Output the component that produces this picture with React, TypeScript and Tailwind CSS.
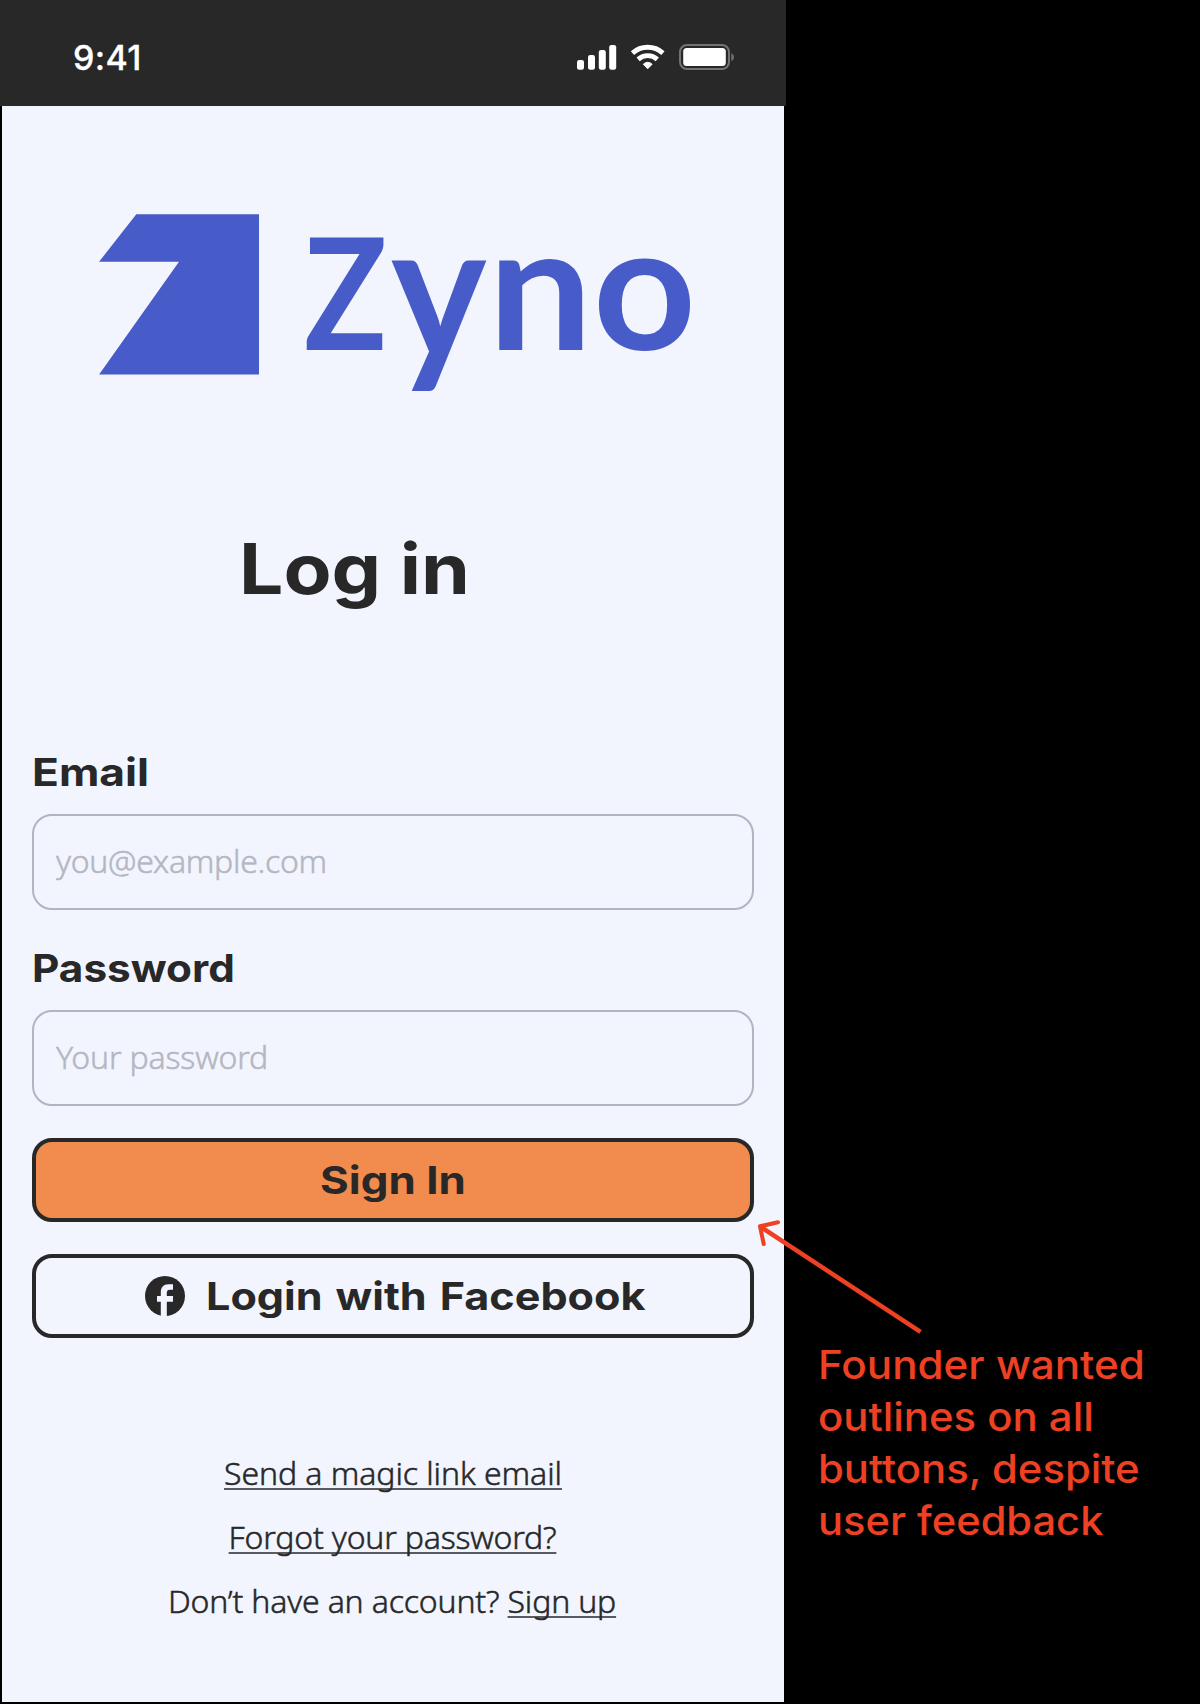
import type { ReactNode } from "react";

function StatusBar() {
  return (
    <header className="flex h-[106px] w-[786px] shrink-0 items-center bg-[#282828] pt-[9px] pl-[73px] text-white">
      <time className="w-[504px] font-['Inter'] text-[34px] leading-[48px] font-medium tracking-[0.400px] [-webkit-text-stroke-width:0.3px]">9:41</time>
      <svg className="-mt-px h-[26px] w-[158px]" viewBox="577 44 158 26" fill="#fff">
        <rect x="577" y="60" width="7" height="9.8" rx="2.2" />
        <rect x="588" y="55" width="7" height="14.8" rx="2.2" />
        <rect x="598.8" y="50" width="7" height="19.8" rx="2.2" />
        <rect x="609.2" y="45" width="7" height="24.8" rx="2.2" />
        <g fill="none" stroke="#fff" strokeWidth="4.800">
          <path d="M632.450 53.100A22.800 22.800 0 0 1 662.950 53.100" />
          <path d="M638.100 59.400A14.300 14.300 0 0 1 657.300 59.400" />
        </g>
        <path d="M647.700 68.800 643.300 64.200Q647.700 60.400 652.100 64.200Z" stroke="#fff" strokeWidth="1" strokeLinejoin="round" />
        <rect x="680" y="45" width="49" height="24" rx="7" fill="none" stroke="#737373" strokeWidth="2" />
        <rect x="683.200" y="48" width="42.600" height="18" rx="3.500" />
        <path d="M731.300 53.200v8c1.500-.700 2.600-2.200 2.600-4s-1.100-3.300-2.600-4z" fill="#737373" />
      </svg>
    </header>
  );
}

function Logo() {
  return (
    <div className="flex h-[316px] items-start pl-[97px] text-[#475bc9]">
      <svg className="mt-[108px] h-[161px] w-[161px]" viewBox="0 0 161 161" fill="currentColor">
        <path d="M37.300.300H160V160.500H.100L80 47.700H.100Z" />
      </svg>
      <div className="mt-[89px] ml-[44px] flex items-baseline font-['Lato'] text-[174px] leading-[176px] font-bold">
        <span className="block w-[87.300px] origin-left scale-x-[0.880] text-[156px]">Z</span>
        <span className="block w-[97px] origin-[0_67px] scale-x-[1.040] scale-y-[1.100]">y</span>
        <span className="block w-[105px] origin-left scale-x-[1.065]">n</span>
        <span className="block w-[96px] origin-left scale-x-[1.030]">o</span>
      </div>
    </div>
  );
}

function Field({ label, labelScale, type, placeholder, spacing }: { label: string; labelScale: string; type: string; placeholder: string; spacing: string }) {
  return (
    <label className="block">
      <span className={`block w-fit origin-left font-['Inter'] text-[38.5px] leading-[48px] font-bold ${labelScale}`}>{label}</span>
      <input
        type={type}
        placeholder={placeholder}
        className={`mt-[18px] block h-[96px] w-full rounded-[20px] border-2 border-[#b2b5bf] bg-transparent px-[22px] pb-[4px] font-['Noto_Sans'] text-[32px] font-light [-webkit-text-stroke-width:0.5px] placeholder:text-[#b4b7c1] placeholder:opacity-100 ${spacing}`}
      />
    </label>
  );
}

function Button({ children, className }: { children: ReactNode; className: string }) {
  return (
    <button className={`mt-8 flex h-[84px] w-full items-center rounded-[20px] border-4 border-[#282828] font-['Inter'] text-[38.5px] leading-[48px] font-bold whitespace-nowrap ${className}`}>
      {children}
    </button>
  );
}

const underlined = "underline decoration-[#5a5b5f] decoration-2 underline-offset-[3px] [text-decoration-skip-ink:none]";

const noteLines = [
  { text: "Founder wanted", fit: "scale-x-[1.081]" },
  { text: "outlines on all", fit: "scale-x-[1.073]" },
  { text: "buttons, despite", fit: "scale-x-[1.071]" },
  { text: "user feedback", fit: "scale-x-[1.067]" },
];

export default function App() {
  return (
    <div className="relative flex h-[1704px] w-[1200px] overflow-hidden bg-black">
      <div className="flex w-[786px] shrink-0 flex-col">
        <StatusBar />
        <main className="ml-[2px] h-[1596px] w-[782px] bg-[#f2f5fe] text-[#282828]">
          <Logo />
          <h1 className="mt-[107px] ml-[236.5px] h-[80px] w-fit origin-left scale-x-[1.130] font-['Inter'] text-[69.5px] leading-[80px] font-bold">Log in</h1>
          <form className="mt-[139px] px-[30px]" onSubmit={(e) => e.preventDefault()}>
            <Field label="Email" labelScale="scale-x-[1.150]" type="email" placeholder="you@example.com" spacing="tracking-[-0.280px]" />
            <div className="h-[34px]" />
            <Field label="Password" labelScale="scale-x-[1.098]" type="password" placeholder="Your password" spacing="tracking-[-0.180px]" />
            <Button className="justify-center bg-[#f18c4e]">
              <span className="scale-x-[1.140]">Sign In</span>
            </Button>
            <Button className="gap-[20.5px] pl-[109px]">
              <svg className="h-10 w-10 shrink-0" viewBox="0 0 40 40">
                <circle cx="20" cy="20" r="20" fill="#282828" />
                <path d="M15.800 41V25.700H12v-5.600h3.800v-3.700c0-5.200 2.700-8.200 7.700-8.200H28v5.500h-3.200c-2 0-3 1-3 2.900v3.500H28v5.600h-6.200V41Z" fill="#f2f5fe" />
              </svg>
              <span className="origin-left scale-x-[1.120] [word-spacing:2.5px]">Login with Facebook</span>
            </Button>
          </form>
          <nav className="mt-[103px] flex flex-col items-center font-['Noto_Sans'] text-[32px] leading-[64px] font-light [-webkit-text-stroke-width:0.5px]">
            <a className={`tracking-[-0.070px] underline-offset-[2px] ${underlined}`}>Send a magic link email</a>
            <a className={`mr-[1px] tracking-[-0.200px] ${underlined}`}>Forgot your password?</a>
            <p className="mr-[2px] tracking-[-0.170px]">
              Don’t have an account? <a className={underlined}>Sign up</a>
            </p>
          </nav>
        </main>
      </div>
      <aside className="mt-[1339px] ml-[32px] font-['Inter'] text-[39px] leading-[52px] font-medium whitespace-nowrap text-[#ee4023]">
        {noteLines.map((line) => (
          <p key={line.text} className={`w-fit origin-left ${line.fit}`}>{line.text}</p>
        ))}
      </aside>
      <svg className="absolute top-[1216px] left-[752px] h-[122px] w-[176px]" viewBox="752 1216 176 122" fill="none" stroke="#ee4023" strokeWidth="4.500">
        <path d="M760 1226.500 920.500 1331.800" />
        <path d="M778 1222.300 760 1226.300 763.700 1244" strokeWidth="4" strokeLinecap="round" strokeLinejoin="round" />
      </svg>
    </div>
  );
}
